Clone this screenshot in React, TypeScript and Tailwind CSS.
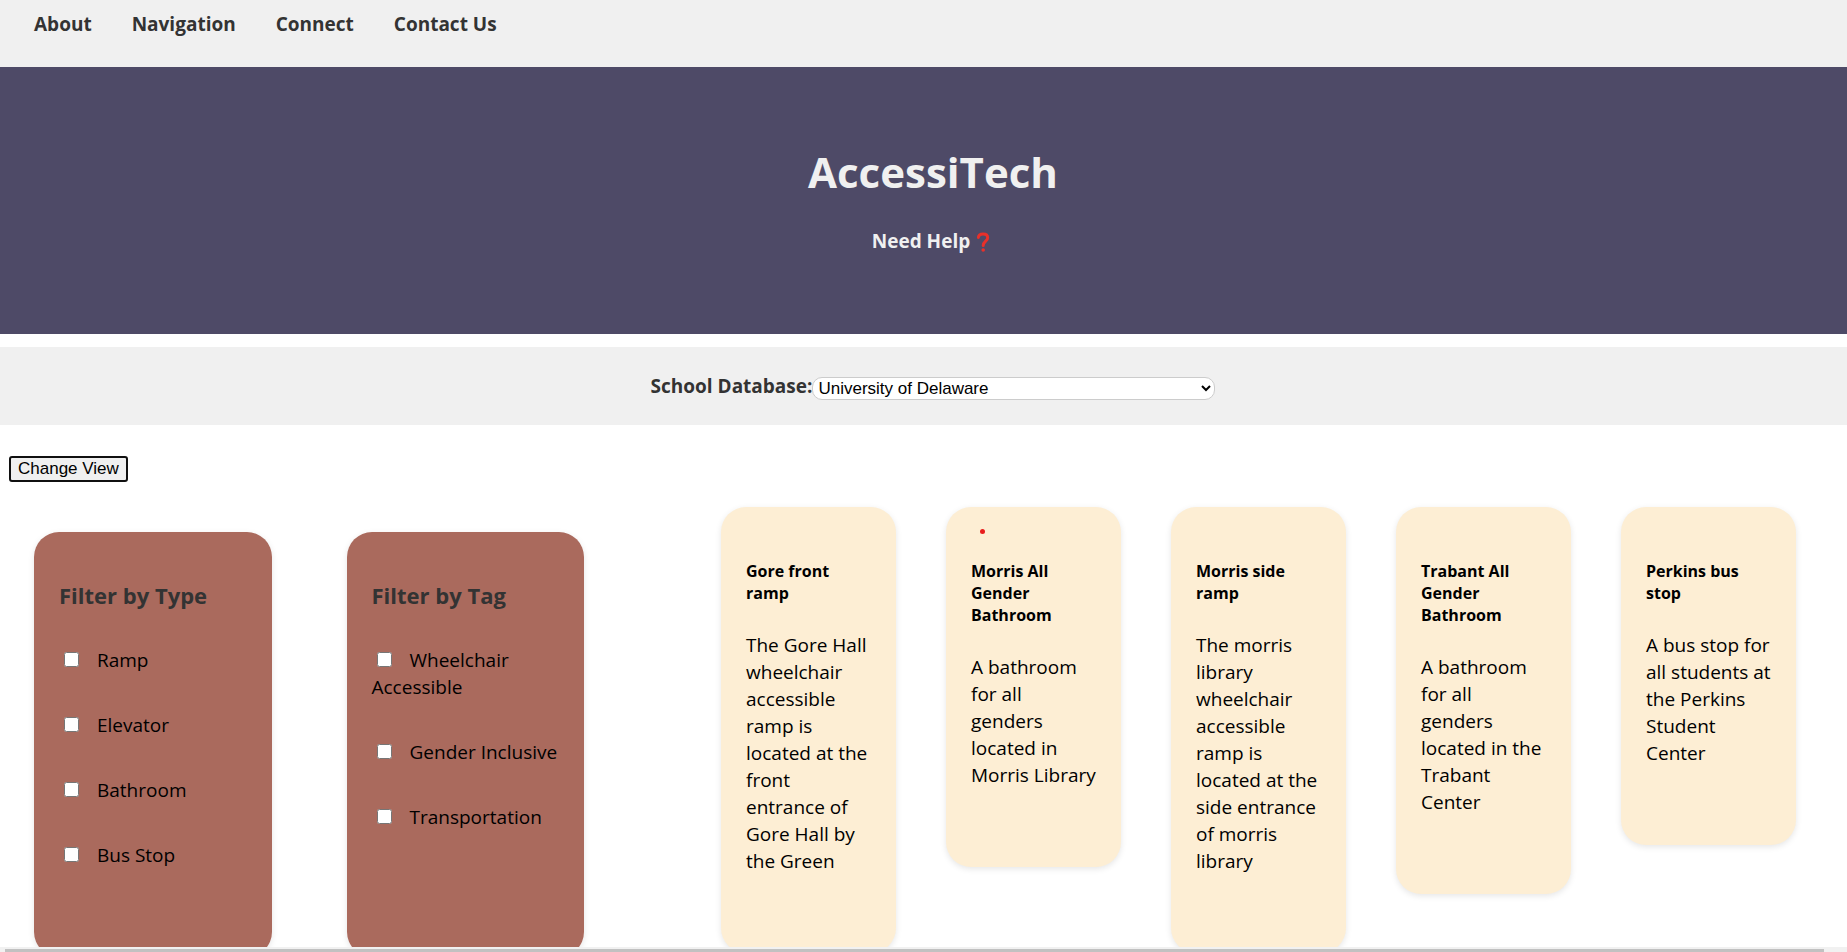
import React from "react";

const navLinks = ["About", "Navigation", "Connect", "Contact Us"];

const filters = [
  { title: "Filter by Type", options: ["Ramp", "Elevator", "Bathroom", "Bus Stop"] },
  { title: "Filter by Tag", options: ["Wheelchair Accessible", "Gender Inclusive", "Transportation"] },
];

const places = [
  { name: "Gore front ramp", text: "The Gore Hall wheelchair accessible ramp is located at the front entrance of Gore Hall by the Green" },
  { name: "Morris All Gender Bathroom", text: "A bathroom for all genders located in Morris Library", marked: true },
  { name: "Morris side ramp", text: "The morris library wheelchair accessible ramp is located at the side entrance of morris library" },
  { name: "Trabant All Gender Bathroom", text: "A bathroom for all genders located in the Trabant Center" },
  { name: "Perkins bus stop", text: "A bus stop for all students at the Perkins Student Center" },
];

function FilterCard({ title, options }: { title: string; options: string[] }) {
  return (
    <fieldset className="h-[425px] min-w-0 rounded-[25px] bg-[#aa6a5d] px-[25px] pt-[47px] shadow-[0_2px_6px_rgba(0,0,0,0.1)]">
      <legend className="float-left w-full text-[22px] leading-[32px] font-bold text-[#333]">{title}</legend>
      <div className="clear-both flex flex-col gap-[38px] pt-[36px]">
        {options.map((option) => (
          <label key={option} className="block text-[19px] leading-[27px] text-black">
            <input type="checkbox" className="mr-[18px] ml-[5px] size-[15px] align-[0px]" />
            {option}
          </label>
        ))}
      </div>
    </fieldset>
  );
}

function PlaceCard({ name, text, marked }: { name: string; text: string; marked?: boolean }) {
  return (
    <article className="relative rounded-[25px] bg-[#fdeed4] pt-[53px] pr-[24px] pb-[78px] pl-[25px] text-black shadow-[0_2px_6px_rgba(0,0,0,0.1)]">
      {marked && <span className="absolute top-[22px] left-[34px] size-[5px] rounded-full bg-[#e81c1c]" />}
      <h3 className="text-[16px] leading-[22px] font-bold">{name}</h3>
      <p className="mt-[28px] text-[19px] leading-[27px]">{text}</p>
    </article>
  );
}

export default function App() {
  return (
    <div className="flex h-screen flex-col overflow-hidden bg-white font-['Open_Sans','Noto_Sans',sans-serif]">
      <div className="min-h-0 flex-1 overflow-hidden">
        <nav className="flex h-[67px] gap-[40px] bg-[#f0f0f0] px-[34px] pt-[11px]">
          {navLinks.map((link) => (
            <a key={link} href="#" className="text-[19px] leading-[27px] font-bold text-[#333]">
              {link}
            </a>
          ))}
        </nav>

        <header className="flex h-[267px] flex-col items-center bg-[#4e4a67] pt-[75px] pl-[19px] text-[#f0f0f0]">
          <h1 className="text-[42px] leading-[60px] font-bold">AccessiTech</h1>
          <a href="#" className="mt-[26px] flex items-center gap-[6px] pr-[4px] text-[19px] leading-[27px] font-bold">
            Need Help
            <svg width="14" height="20" viewBox="0 0 14 20" fill="none" aria-hidden="true">
              <path d="M2.4 5.4C2.6 3.2 4.4 2 7 2c2.900 0 4.700 1.400 4.700 3.700 0 3.300-4.500 3.600-4.500 7.800" stroke="#e8302a" strokeWidth="3" strokeLinecap="round" />
              <circle cx="7.200" cy="18" r="1.800" fill="#e8302a" />
            </svg>
          </a>
        </header>

        <section className="mt-[13px] flex h-[78px] items-center justify-center bg-[#f0f0f0] pl-[19px]">
          <label htmlFor="school" className="text-[19px] leading-[27px] font-bold text-[#333]">
            School Database:
          </label>
          <select
            id="school"
            className="mt-[4px] h-[23px] w-[403px] rounded-[10px] border border-[#ccc] bg-white pr-[2px] pl-px font-['Liberation_Sans',Arial,sans-serif] text-[17px] leading-[20px] text-black"
          >
            <option>University of Delaware</option>
          </select>
        </section>

        <button
          type="button"
          className="mt-[31px] ml-[9px] block h-[26px] rounded-[3px] border-2 border-[#101010] bg-[#f0f0f0] px-[7px] font-['Liberation_Sans',Arial,sans-serif] text-[17px] leading-[20px] text-black"
        >
          Change View
        </button>

        <main className="flex items-start gap-[137px] pt-[25px] pr-[51px] pl-[34px]">
          <div className="grid min-w-0 flex-[550] grid-cols-2 gap-[75px] pt-[25px]">
            {filters.map((filter) => (
              <FilterCard key={filter.title} {...filter} />
            ))}
          </div>
          <div className="grid min-w-0 flex-[1075] grid-cols-5 items-start gap-[50px]">
            {places.map((place) => (
              <PlaceCard key={place.name} {...place} />
            ))}
          </div>
        </main>
      </div>

      <div className="h-[5px] bg-[#f1f1f1] pt-[2px] pr-[23px] pl-[5px]">
        <div className="h-[3px] bg-[#c1c1c1]" />
      </div>
    </div>
  );
}
